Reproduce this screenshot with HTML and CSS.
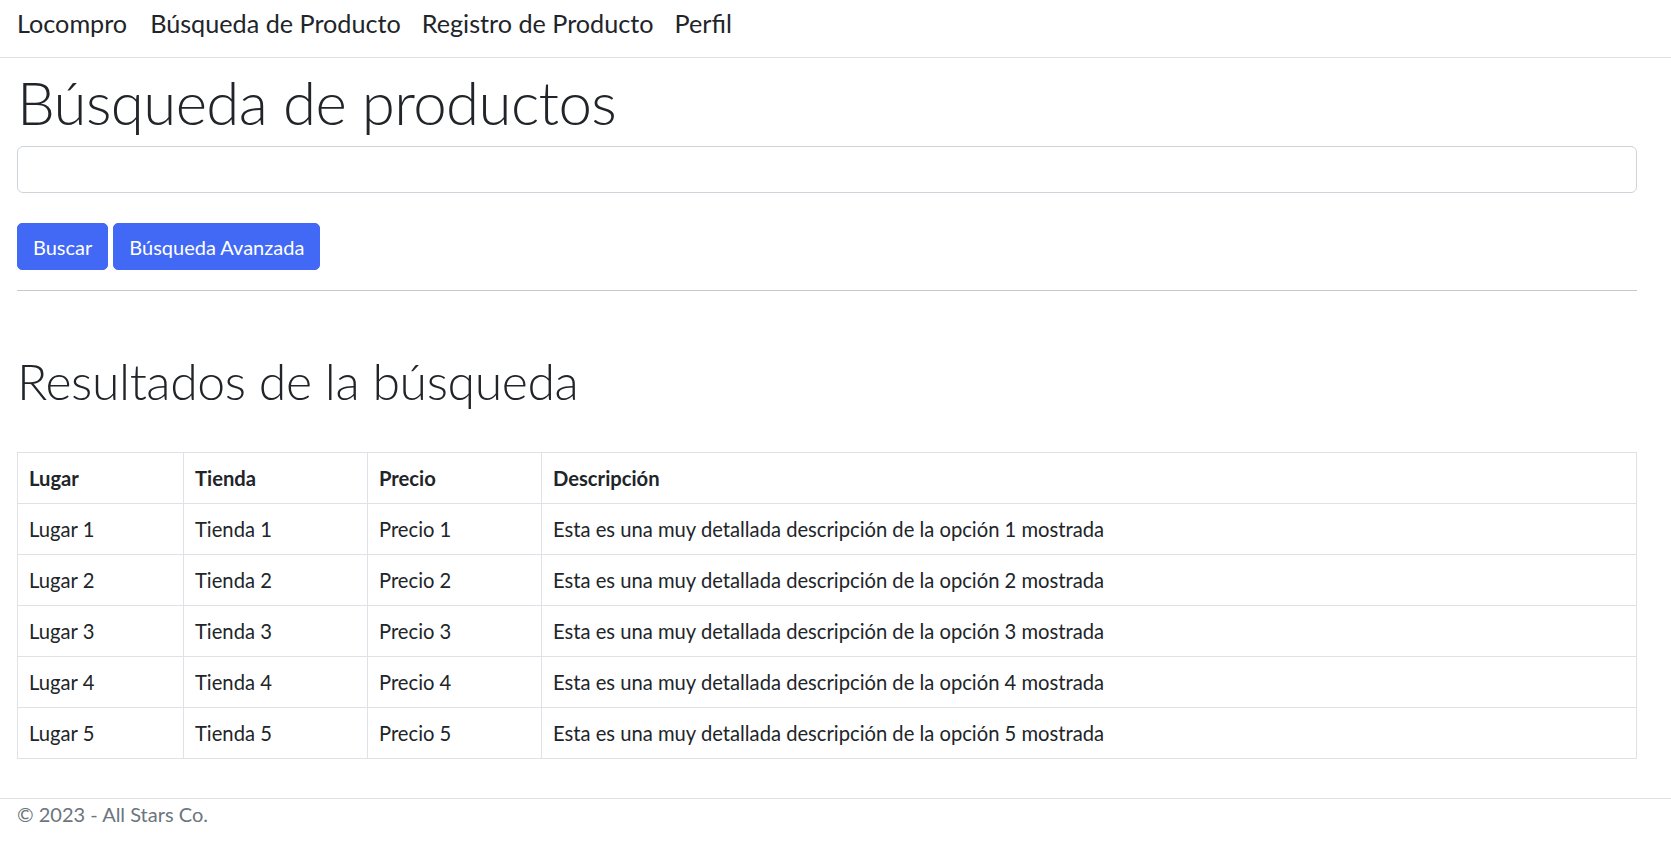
FILE: index.html
```html
<!DOCTYPE html>
<html lang="es">
<head>
<meta charset="utf-8">
<title>Búsqueda de productos - Locompro</title>
<link rel="stylesheet" href="styles.css">
</head>
<body>
<header class="topbar">
  <nav class="nav">
    <a class="nav-link brand" href="#">Locompro</a>
    <a class="nav-link" href="#">Búsqueda de Producto</a>
    <a class="nav-link" href="#">Registro de Producto</a>
    <a class="nav-link" href="#">Perfil</a>
  </nav>
</header>
<main class="page">
  <h1 class="title">Búsqueda de productos</h1>
  <input class="search-input" type="text" aria-label="Buscar">
  <div class="actions">
    <button class="btn">Buscar</button>
    <button class="btn">Búsqueda Avanzada</button>
  </div>
  <hr class="divider">
  <h2 class="subtitle">Resultados de la búsqueda</h2>
  <table class="results">
    <colgroup>
      <col class="c-lugar"><col class="c-tienda"><col class="c-precio"><col>
    </colgroup>
    <thead>
      <tr><th>Lugar</th><th>Tienda</th><th>Precio</th><th>Descripción</th></tr>
    </thead>
    <tbody>
      <tr><td>Lugar 1</td><td>Tienda 1</td><td>Precio 1</td><td>Esta es una muy detallada descripción de la opción 1 mostrada</td></tr>
      <tr><td>Lugar 2</td><td>Tienda 2</td><td>Precio 2</td><td>Esta es una muy detallada descripción de la opción 2 mostrada</td></tr>
      <tr><td>Lugar 3</td><td>Tienda 3</td><td>Precio 3</td><td>Esta es una muy detallada descripción de la opción 3 mostrada</td></tr>
      <tr><td>Lugar 4</td><td>Tienda 4</td><td>Precio 4</td><td>Esta es una muy detallada descripción de la opción 4 mostrada</td></tr>
      <tr><td>Lugar 5</td><td>Tienda 5</td><td>Precio 5</td><td>Esta es una muy detallada descripción de la opción 5 mostrada</td></tr>
    </tbody>
  </table>
</main>
<footer class="footer">© 2023 - All Stars Co.</footer>
</body>
</html>
```

FILE: styles.css
```css
html, body { margin: 0; padding: 0; }
body {
  font-family: "Lato", "Roboto", sans-serif;
  font-size: 20px;
  line-height: 1.5;
  color: #212529;
  background: #fff;
  height: 849px;
  display: flex;
  flex-direction: column;
}
.topbar {
  height: 52px;
  border-bottom: 1px solid #dee2e6;
  display: flex;
  align-items: flex-start;
  padding: 5px 0 0 17px;
  box-sizing: content-box;
  flex: none;
}
.nav { display: flex; gap: 21px; }
.nav-link {
  font-size: 25.2px;
  line-height: 37px;
  color: #212529;
  text-decoration: none;
}
.brand { margin-right: 2px; }
.page {
  padding: 0 34px 0 17px;
  flex: 1;
}
.title {
  font-weight: 300;
  font-size: 60px;
  line-height: 72px;
  letter-spacing: -0.6px;
  margin: 8px 0 8px;
}
.search-input {
  display: block;
  box-sizing: border-box;
  width: 100%;
  height: 47px;
  border: 1px solid #ced4da;
  border-radius: 6px;
  font: inherit;
  padding: 7px 15px;
}
.actions { margin-top: 30px; display: flex; gap: 5px; }
.btn {
  font: inherit;
  height: 47px;
  padding: 0 15px;
  background: #4169f5;
  color: #fff;
  border: 1px solid #4169f5;
  border-radius: 5px;
}
.divider {
  border: 0;
  border-top: 1px solid #c8c9ca;
  margin: 20px 0 0;
}
.subtitle {
  font-weight: 300;
  font-size: 50px;
  line-height: 60px;
  letter-spacing: -0.4px;
  margin: 60px 0 0;
}
.results {
  width: 100%;
  border-collapse: collapse;
  margin-top: 41px;
  font-size: 20.2px;
}
.c-lugar { width: 166px; }
.c-tienda { width: 184px; }
.c-precio { width: 174px; }
.results th, .results td {
  border: 1px solid #dee2e6;
  padding: 10px 11px;
  text-align: left;
  line-height: 30px;
}
.results th { font-weight: 700; }
.footer {
  height: 50px;
  border-top: 1px solid #dee2e6;
  padding-left: 17px;
  color: #6c757d;
  line-height: 30px;
  flex: none;
}
```
